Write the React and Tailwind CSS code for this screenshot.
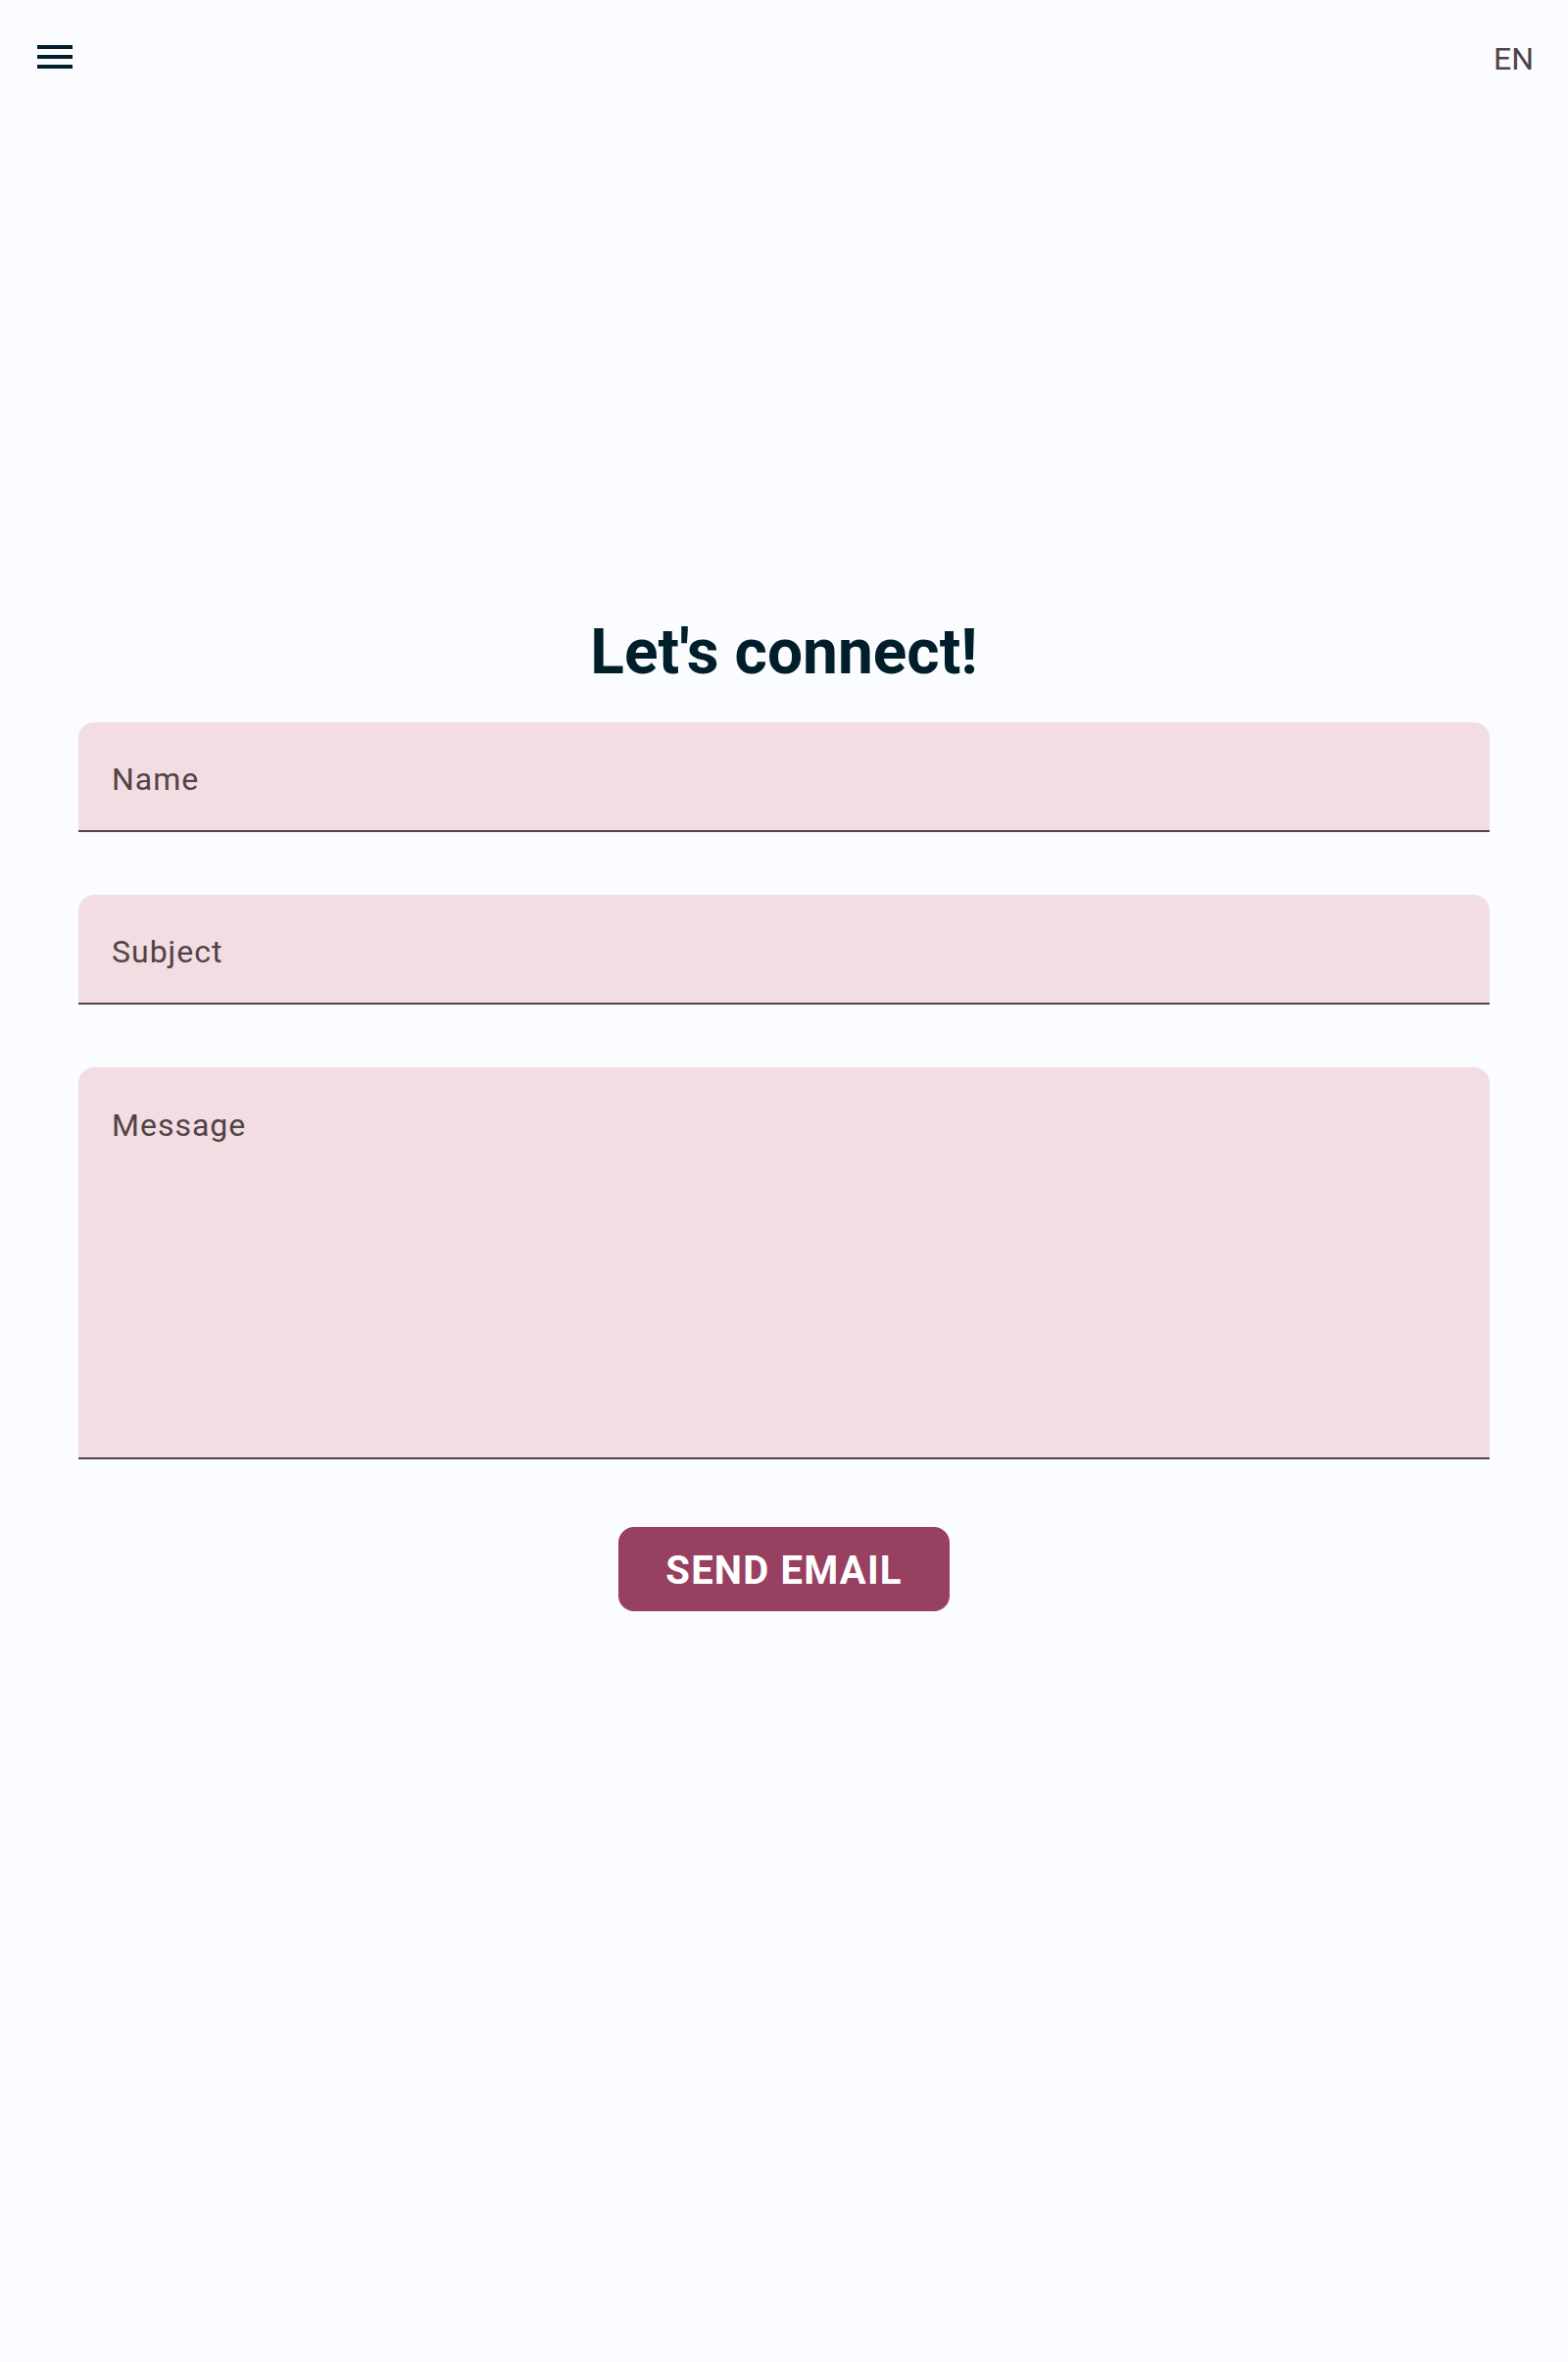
import React from 'react'

function MenuIcon() {
  return (
    <svg width="48" height="48" viewBox="0 0 24 24" fill="#001f2a">
      <path d="M3 18h18v-2H3v2zm0-5h18v-2H3v2zm0-7v2h18V6H3z" />
    </svg>
  )
}

function Field({ label, tall }) {
  return (
    <div className={`w-full rounded-t-[16px] bg-[#f2dde2] border-b-2 border-[#514347] pl-[34px] ${tall ? 'h-[400px] pt-[35px]' : 'h-[112px] pt-[34px]'}`}>
      <span className="block text-[32px] leading-[48px] text-[#514347] tracking-[1px]">{label}</span>
    </div>
  )
}

export default function App() {
  return (
    <div className="min-h-[2410px] bg-[#fbfcff] font-['Roboto','Liberation_Sans',sans-serif]">
      <header className="flex items-start justify-between pl-8 pr-[35px] pt-[34px]">
        <button className="w-12 h-12">
          <MenuIcon />
        </button>
        <span className="mt-[2px] text-[32px] leading-[48px] text-[#514347]">EN</span>
      </header>

      <main className="px-20 mt-[543px] flex flex-col items-center">
        <h1 className="text-[64px] leading-[77px] font-bold text-[#001f2a]">Let's connect!</h1>
        <form className="w-full mt-[33px] flex flex-col gap-16">
          <Field label="Name" />
          <Field label="Subject" />
          <Field label="Message" tall />
        </form>
        <button className="mt-[69px] h-[86px] w-[338px] pt-[4px] rounded-[16px] bg-[#984061] text-white text-[40px] font-bold tracking-[0.03em]">
          SEND EMAIL
        </button>
      </main>
    </div>
  )
}
